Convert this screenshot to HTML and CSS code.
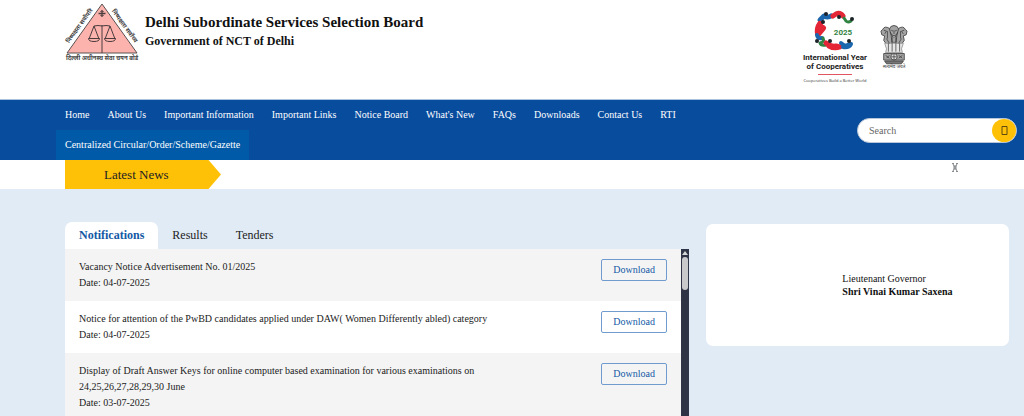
FILE: index.html
```html
<!DOCTYPE html>
<html lang="en">

<head>
    <meta charset="UTF-8">
    <meta name="viewport" content="width=device-width, initial-scale=1">
    <title>Delhi Subordinate Services Selection Board</title>
    <link rel="stylesheet" href="styles.css">
</head>

<body>
    <header class="header">
        <a href="#" class="brand">
            <svg class="brand-logo" viewBox="0 0 74 62" role="img" aria-label="DSSSB logo">
                <path d="M37 4 L72 53 L2 53 Z" fill="#fcb3ae" stroke="#5a5050" stroke-width="1"/>
                <g fill="none" stroke="#4a3c3c" stroke-width="1">
                    <path d="M37 10v7M33.500 13.500h7" stroke-width="1.300"/>
                    <path d="M35 11.500h4M35 15.500h4" stroke-width=".6"/>
                    <path d="M37 25V53M29 26q4-1 8 0q4-1 8 0"/>
                    <path d="M29 26l-5 13M29 26l5 13M45 26l-5 13M45 26l5 13"/>
                    <path d="M23.500 38.500q0 3 5.500 3t5.500-3zM39.500 38.500q0 3 5.500 3t5.500-3z"/>
                </g>
                <g font-family="'Noto Sans Devanagari', 'Noto Sans', sans-serif" font-weight="700" fill="#444" text-anchor="middle">
                    <text transform="translate(16 27) rotate(-54)" font-size="6">निष्पक्षता सर्वोपरि</text>
                    <text transform="translate(58 27) rotate(54)" font-size="6">निष्पक्षता सर्वोच्च</text>
                    <text x="37" y="60" font-size="6">दिल्ली अधीनस्थ सेवा चयन बोर्ड</text>
                </g>
            </svg>
            <span class="brand-text">
                <strong class="brand-title">Delhi Subordinate Services Selection Board</strong>
                <strong class="brand-sub">Government of NCT of Delhi</strong>
            </span>
        </a>
        <div class="header-logos">
            <svg class="coop-logo" viewBox="0 0 70 76" role="img" aria-label="International Year of Cooperatives 2025">
                <g fill="none" stroke-linecap="round" stroke-linejoin="round">
                    <path d="M20 13l4-4q4 2 7 0" stroke="#1b66ad" stroke-width="5"/>
                    <path d="M33 9l3-2q4-2 7 2" stroke="#e42535" stroke-width="5"/>
                    <path d="M44 11l2 3q2 2 5 0" stroke="#318342" stroke-width="3"/>
                    <path d="M20 17q-3 4-2 10l5-6" stroke="#e42535" stroke-width="6"/>
                    <path d="M17 28q1 4 5 3" stroke="#1b66ad" stroke-width="4"/>
                    <path d="M23 31q2 4-3 5q1 3 6 2" stroke="#318342" stroke-width="3"/>
                    <path d="M26 36q5 4 10 3l4 1q-6 2-11-1" stroke="#e42535" stroke-width="5"/>
                    <path d="M41 36l4 3l6-2q-2 4-8 3" stroke="#1b66ad" stroke-width="4"/>
                </g>
                <g fill="#1c2228">
                    <circle cx="26" cy="7" r="2"/>
                    <circle cx="39" cy="10" r="2"/>
                    <circle cx="52" cy="12" r="2"/>
                    <circle cx="23" cy="15" r="2"/>
                    <circle cx="17" cy="34" r="2"/>
                    <circle cx="30" cy="34" r="2"/>
                    <circle cx="49" cy="34" r="2"/>
                </g>
                <g font-family="Roboto, sans-serif" text-anchor="middle">
                    <text x="43" y="28" font-size="8" font-weight="700" fill="#318342">2025</text>
                    <text x="35" y="53" font-size="8" font-weight="700" fill="#222">International Year</text>
                    <text x="35" y="62" font-size="8" font-weight="700" fill="#222">of Cooperatives</text>
                    <text x="35" y="75" font-size="4" font-family="'Open Sans', sans-serif" fill="#333">Cooperatives Build a Better World</text>
                </g>
                <path d="M18 67.500h34" stroke="#e05560" stroke-width="1"/>
            </svg>
            <svg class="emblem" viewBox="0 0 30 48" role="img" aria-label="National emblem of India">
                <g fill="#a4a4a4" stroke="#4a4a4a" stroke-width="1">
                    <path d="M10 5q1-4 5-4t5 4l1 6-3 8h-6l-3-8z"/>
                    <path d="M10 4Q5 1 3 5l-2 2 1 4 3 1-1 5 3 4h6l-1-9z"/>
                    <path d="M20 4q5-3 7 1l2 2-1 4-3 1 1 5-3 4h-6l1-9z"/>
                    <path d="M5 20h20l-2 6 1 4H6l1-4z" fill="#e6e6e6" stroke="#999"/>
                    <path d="M4 31h22v7H4z"/>
                    <circle cx="15" cy="34.500" r="3.500" fill="#ddd"/>
                    <path d="M5 39h20l-2 3H7z" fill="#777"/>
                </g>
                <g fill="none" stroke="#3c3c3c" stroke-width=".8">
                    <path d="M12 6l2 1M18 6l-2 1M15 6v4M13 11q2 2 4 0M11 8l3 6M19 8l-3 6M13 14v5M17 14v5"/>
                    <path d="M4 6l3 1-2 3M26 6l-3 1 2 3M8 7v8M22 7v8M7 15l3 5M23 15l-3 5"/>
                    <path d="M9 20v9M13 20v9M17 20v9M21 20v9M12 34.500h6M15 31v7"/>
                    <path d="M6 33l4 3M7 36l3-3M20 33l4 3M20 36l4-3"/>
                </g>
                <text x="15" y="47" font-size="5" text-anchor="middle" fill="#333" font-family="'Noto Sans Devanagari', 'Noto Sans', sans-serif">सत्यमेव जयते</text>
            </svg>
        </div>
    </header>

    <nav class="navbar">
        <ul class="menu">
            <li><a href="#">Home</a></li>
            <li><a href="#">About Us</a></li>
            <li><a href="#">Important Information</a></li>
            <li><a href="#">Important Links</a></li>
            <li><a href="#">Notice Board</a></li>
            <li><a href="#">What's New</a></li>
            <li><a href="#">FAQs</a></li>
            <li><a href="#">Downloads</a></li>
            <li><a href="#">Contact Us</a></li>
            <li><a href="#">RTI</a></li>
            <li><a href="#" class="active">Centralized Circular/Order/Scheme/Gazette</a></li>
        </ul>
        <form class="search">
            <input type="text" placeholder="Search" aria-label="Search">
            <button type="button" aria-label="Submit search">
                <svg width="7" height="9" viewBox="0 0 7 9"><path d="M1 .5h5v8H1z" fill="none" stroke="#5c4a10"/></svg>
            </button>
        </form>
    </nav>

    <section class="news">
        <h2 class="news-title">Latest News</h2>
        <button type="button" class="news-toggle" aria-label="Pause news">
            <svg width="6" height="9" viewBox="0 0 6 9"><path d="M0 .5h2M4 .5h2M0 8.500h2M4 8.500h2M1 1l4 7M5 1L1 8M2 2v5M4 2v5" fill="none" stroke="#8a8d90"/></svg>
        </button>
    </section>

    <main class="main">
        <section class="board">
            <div class="tabs" role="tablist">
                <button type="button" role="tab" aria-selected="true" class="tab active">Notifications</button>
                <button type="button" role="tab" aria-selected="false" class="tab">Results</button>
                <button type="button" role="tab" aria-selected="false" class="tab">Tenders</button>
            </div>
            <div class="board-body">
                <ul class="notices">
                    <li class="notice">
                        <div class="notice-text">
                            <p>Vacancy Notice Advertisement No. 01/2025</p>
                            <p>Date: 04-07-2025</p>
                        </div>
                        <a href="#" class="download">Download</a>
                    </li>
                    <li class="notice">
                        <div class="notice-text">
                            <p>Notice for attention of the PwBD candidates applied under DAW( Women Differently abled) category</p>
                            <p>Date: 04-07-2025</p>
                        </div>
                        <a href="#" class="download">Download</a>
                    </li>
                    <li class="notice">
                        <div class="notice-text">
                            <p>Display of Draft Answer Keys for online computer based examination for various examinations on 24,25,26,27,28,29,30 June</p>
                            <p>Date: 03-07-2025</p>
                        </div>
                        <a href="#" class="download">Download</a>
                    </li>
                </ul>
                <div class="scrollbar" aria-hidden="true">
                    <div class="scroll-up"></div>
                    <div class="scroll-thumb"></div>
                </div>
            </div>
        </section>
        <aside class="profile">
            <div class="profile-text">
                <p>Lieutenant Governor</p>
                <p><strong>Shri Vinai Kumar Saxena</strong></p>
            </div>
        </aside>
    </main>
</body>

</html>
```
FILE: styles.css
```css
* {
    box-sizing: border-box;
}

body {
    display: flex;
    flex-direction: column;
    min-height: 100vh;
    margin: 0;
    background: #fff;
    color: #222;
    font-family: "Liberation Serif", "Times New Roman", serif;
    font-size: 10px;
}

ul,
p,
h2 {
    margin: 0;
    padding: 0;
    list-style: none;
}

a {
    color: inherit;
    text-decoration: none;
}

button,
input {
    border: 0;
    padding: 0;
    background: none;
    color: inherit;
    font: inherit;
}

button {
    cursor: pointer;
}

/* header */
.header {
    display: flex;
    justify-content: space-between;
    align-items: flex-start;
    padding: 0 116px 16px 65px;
    border-bottom: 1px solid #a9c3df;
}

.brand {
    display: flex;
    gap: 6px;
    color: #111;
}

.brand-logo {
    width: 74px;
    height: 62px;
}

.brand-text {
    display: flex;
    flex-direction: column;
    padding-top: 12px;
}

.brand-title {
    font-size: 15px;
    line-height: 20px;
}

.brand-sub {
    font-size: 12px;
    line-height: 18px;
}

.header-logos {
    display: flex;
    gap: 10px;
    padding-top: 7px;
}

.coop-logo {
    width: 70px;
    height: 76px;
}

.emblem {
    width: 28px;
    height: 48px;
    margin-top: 16px;
}

/* navigation */
.navbar {
    display: flex;
    align-items: center;
    gap: 20px;
    padding: 0 7px 0 56px;
    background: #084c9e;
    color: #fff;
}

.menu {
    display: flex;
    flex: 1;
    flex-wrap: wrap;
}

/* keeps the long last entry on a row of its own */
.menu li:last-child {
    margin-right: 30%;
}

.menu a {
    display: block;
    padding: 0 9px;
    line-height: 30px;
}

.menu a:hover,
.menu a.active {
    background: #015aa8;
}

.search {
    display: flex;
    width: 160px;
    height: 25px;
    border: 1px solid #b9c6d8;
    border-radius: 13px;
    background: #fff;
}

.search input {
    flex: 1;
    min-width: 0;
    padding-left: 11px;
    color: #333;
    outline: none;
}

.search input::placeholder {
    color: #666;
}

.search button {
    display: flex;
    align-items: center;
    justify-content: center;
    width: 24px;
    border-radius: 50%;
    background: #ffc107;
}

/* latest news */
.news {
    display: flex;
    justify-content: space-between;
    align-items: flex-start;
    padding: 0 66px 0 65px;
}

.news-title {
    width: 156px;
    padding-left: 39px;
    background: #ffc107;
    clip-path: polygon(0 0, 92% 0, 100% 50%, 92% 100%, 0 100%);
    color: #222;
    font-size: 13px;
    font-weight: 400;
    line-height: 29px;
}

.news-toggle {
    display: flex;
    padding-top: 3px;
}

/* content */
.main {
    display: grid;
    flex: 1;
    grid-template-columns: 624fr 303fr;
    align-items: start;
    gap: 17px;
    padding: 33px 15px 0 65px;
    background: #e1ebf6;
}

.tabs {
    display: flex;
}

.tab {
    padding: 0 14px;
    border-radius: 7px 7px 0 0;
    font-size: 12px;
    line-height: 27px;
}

.tab.active {
    background: #fff;
    color: #1459a6;
    font-weight: 700;
}

.board-body {
    display: flex;
}

.notices {
    flex: 1;
}

.notice {
    display: flex;
    justify-content: space-between;
    align-items: flex-start;
    gap: 20px;
    padding: 10px 14px;
    background: #fff;
    line-height: 16px;
}

.notice:nth-child(odd) {
    background: #f4f4f4;
}

.notice-text {
    max-width: 440px;
}

.download {
    padding: 0 11px;
    border: 1px solid #6f9bce;
    border-radius: 2px;
    color: #1459a6;
    line-height: 20px;
}

.scrollbar {
    display: flex;
    flex-direction: column;
    align-items: center;
    gap: 2px;
    width: 8px;
    padding-top: 2px;
    background: #2e3445;
}

.scroll-up {
    border: 3px solid transparent;
    border-top: 0;
    border-bottom: 4px solid #d5d6d8;
}

.scroll-thumb {
    width: 6px;
    height: 33px;
    border-radius: 3px;
    background: #c9c9cb;
}

.profile {
    display: grid;
    grid-template-columns: 45% 55%;
    align-items: center;
    min-height: 122px;
    margin-top: 2px;
    border-radius: 7px;
    background: #fff;
}

.profile-text {
    grid-column: 2;
    color: #111;
    line-height: 13px;
}
```
